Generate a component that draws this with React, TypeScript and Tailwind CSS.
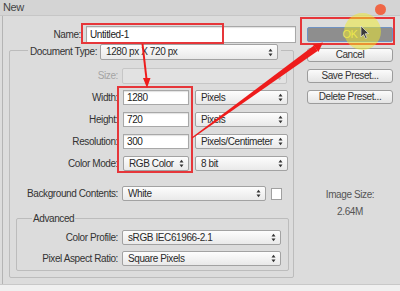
import React from 'react';

function Arrows({ light }: { light?: boolean }) {
  const c = light ? '#b8b8b8' : '#333333';
  return (
    <svg width="5" height="9" viewBox="0 0 5 9" className="shrink-0">
      <polygon points="0.5,3.5 2.5,0.8 4.5,3.5" fill={c} />
      <polygon points="0.5,5.5 2.5,8.2 4.5,5.5" fill={c} />
    </svg>
  );
}

function Select({ className, text, disabled }: { className: string; text?: string; disabled?: boolean }) {
  return (
    <div
      className={`${className} flex items-center justify-between rounded-[2px] border pl-[5px] pr-[4px] ${
        disabled
          ? 'border-[#c6c6c6] bg-[#e2e2e2]'
          : 'border-[#a2a2a2] bg-linear-to-b from-[#fdfdfd] to-[#e9e9e9]'
      }`}
    >
      <span className="whitespace-nowrap text-[#2a2a2a]">{text}</span>
      <Arrows light={disabled} />
    </div>
  );
}

function Input({ className, text }: { className: string; text: string }) {
  return (
    <div
      className={`${className} flex items-center border border-[#a8a8a8] bg-white pl-[3px] text-[#222] shadow-[inset_0_1px_1px_rgba(0,0,0,0.12)]`}
    >
      {text}
    </div>
  );
}

function Button({ className, text }: { className: string; text: string }) {
  return (
    <div
      className={`${className} flex w-[86px] items-center justify-center rounded-[3px] border border-[#9c9c9c] bg-linear-to-b from-[#fbfbfb] to-[#e4e4e4] text-[#333]`}
    >
      {text}
    </div>
  );
}

export default function App() {
  return (
    <div className="relative flex h-[291px] w-[400px] flex-col overflow-hidden bg-[#dcdcdc] font-['Liberation_Sans',Arial,sans-serif] text-[10px] leading-none tracking-[-0.4px] text-[#333]">
      {/* title bar */}
      <div className="flex h-[16px] items-center border-b border-[#c6c6c6] bg-[#d4d4d4] pl-[3px] text-[11px] text-[#444]">
        New
      </div>

      {/* body */}
      <div className="ml-[2px] flex flex-1 border-l border-[#b4b4b4]">
        {/* left column */}
        <div className="flex w-[296px] flex-col">
          <div className="mt-[10px] flex h-[17px] items-center">
            <div className="w-[78px] text-right">Name:</div>
            <Input className="ml-[5px] h-[17px] w-[210px]" text="Untitled-1" />
          </div>

          <div className="ml-[6px] mt-[7px] flex w-[285px] flex-col rounded-[2px] border border-[#bcbcbc] pb-[6px]">
            <div className="-mt-[7px] ml-[18px] flex h-[16px] w-[253px] items-center bg-[#dcdcdc] px-[2px]">
              <div className="w-[66px] whitespace-nowrap text-right">Document Type:</div>
              <Select className="ml-[4px] h-[16px] w-[178px]" text="1280 px X 720 px" />
            </div>

            <div className="mt-[8px] flex h-[16px] items-center">
              <div className="w-[108px] text-right text-[#a4a4a4]">Size:</div>
              <Select className="ml-[4px] h-[16px] w-[165px]" disabled />
            </div>

            <div className="mt-[6px] flex h-[15px] items-center">
              <div className="w-[108px] text-right">Width:</div>
              <Input className="ml-[5px] h-[15px] w-[66px]" text="1280" />
              <Select className="ml-[6px] h-[15px] w-[93px]" text="Pixels" />
            </div>
            <div className="mt-[7px] flex h-[15px] items-center">
              <div className="w-[108px] text-right">Height:</div>
              <Input className="ml-[5px] h-[15px] w-[66px]" text="720" />
              <Select className="ml-[6px] h-[15px] w-[93px]" text="Pixels" />
            </div>
            <div className="mt-[7px] flex h-[15px] items-center">
              <div className="w-[108px] text-right">Resolution:</div>
              <Input className="ml-[5px] h-[15px] w-[66px]" text="300" />
              <Select className="ml-[6px] h-[15px] w-[93px]" text="Pixels/Centimeter" />
            </div>
            <div className="mt-[7px] flex h-[15px] items-center">
              <div className="w-[108px] text-right">Color Mode:</div>
              <Select className="ml-[5px] h-[15px] w-[66px]" text="RGB Color" />
              <Select className="ml-[6px] h-[15px] w-[93px]" text="8 bit" />
            </div>

            <div className="mt-[15px] flex h-[15px] items-center">
              <div className="w-[108px] whitespace-nowrap text-right">Background Contents:</div>
              <Select className="ml-[4px] h-[15px] w-[144px]" text="White" />
              <div className="ml-[5px] h-[12px] w-[11px] border border-[#a0a0a0] bg-white" />
            </div>

            <div className="ml-[6px] mt-[17px] flex w-[273px] flex-col rounded-[2px] border border-[#bcbcbc] pb-[4px]">
              <div className="-mt-[6px] ml-[15px] flex h-[12px] items-center self-start bg-[#dcdcdc] px-[1px]">
                Advanced
              </div>
              <div className="mt-[5px] flex h-[15px] items-center">
                <div className="w-[101px] text-right">Color Profile:</div>
                <Select className="ml-[4px] h-[15px] w-[159px]" text="sRGB IEC61966-2.1" />
              </div>
              <div className="mt-[6px] flex h-[15px] items-center">
                <div className="w-[101px] whitespace-nowrap text-right">Pixel Aspect Ratio:</div>
                <Select className="ml-[4px] h-[15px] w-[159px]" text="Square Pixels" />
              </div>
            </div>
          </div>
        </div>

        {/* right column */}
        <div className="flex flex-1 flex-col pl-[8px]">
          <div className="mt-[11px] flex h-[15px] w-[86px] items-center justify-center rounded-[2px] border border-[#6f92c4] bg-[#8e8e8e] text-[11px] text-[#e8e070]">
            OK
          </div>
          <Button className="mt-[6px] h-[14px]" text="Cancel" />
          <Button className="mt-[7px] h-[14px]" text="Save Preset..." />
          <Button className="mt-[7px] h-[14px]" text="Delete Preset..." />
          <div className="mt-[85px] w-[86px] text-center leading-[11px] text-[#555]">Image Size:</div>
          <div className="mt-[6px] w-[86px] text-center leading-[11px] text-[#555]">2.64M</div>
        </div>
      </div>

      {/* bottom strip */}
      <div className="h-[7px] border-t border-[#c8c8c8] bg-[#f0f0f0]" />

      {/* annotations */}
      <div className="absolute left-[375px] top-[4px] h-[11px] w-[11px] rounded-full bg-[#ef6646]" />
      <div className="absolute left-[81px] top-[23px] h-[21px] w-[143px] border-2 border-[#e6363a]" />
      <div className="absolute left-[117px] top-[86px] h-[87px] w-[76px] border-2 border-[#e6363a]" />
      <div className="absolute left-[300px] top-[17px] h-[28px] w-[95px] border-2 border-[#e6363a]" />
      <div className="absolute left-[344px] top-[13px] h-[37px] w-[37px] rounded-full bg-[rgba(240,236,40,0.5)]" />

      <svg className="pointer-events-none absolute left-0 top-0" width="400" height="291" viewBox="0 0 400 291">
        <line x1="142.5" y1="44" x2="146.5" y2="79" stroke="#ee1c1c" strokeWidth="2" />
        <polygon points="143,78 150.5,78 147,88" fill="#ee1c1c" />
        <polygon points="192.3,138.4 317.6,51 314,45.6 191.7,137.6" fill="#ee1c1c" />
        <polygon points="318.4,52 312.8,44.6 323,42.5" fill="#ee1c1c" />
        <polygon
          points="361,26 361,37 363.5,34.5 365.5,38.5 367,37.8 365,33.8 368.5,33.5"
          fill="#3a3a3a"
          stroke="#f4f4f4"
          strokeWidth="0.6"
        />
      </svg>
    </div>
  );
}
